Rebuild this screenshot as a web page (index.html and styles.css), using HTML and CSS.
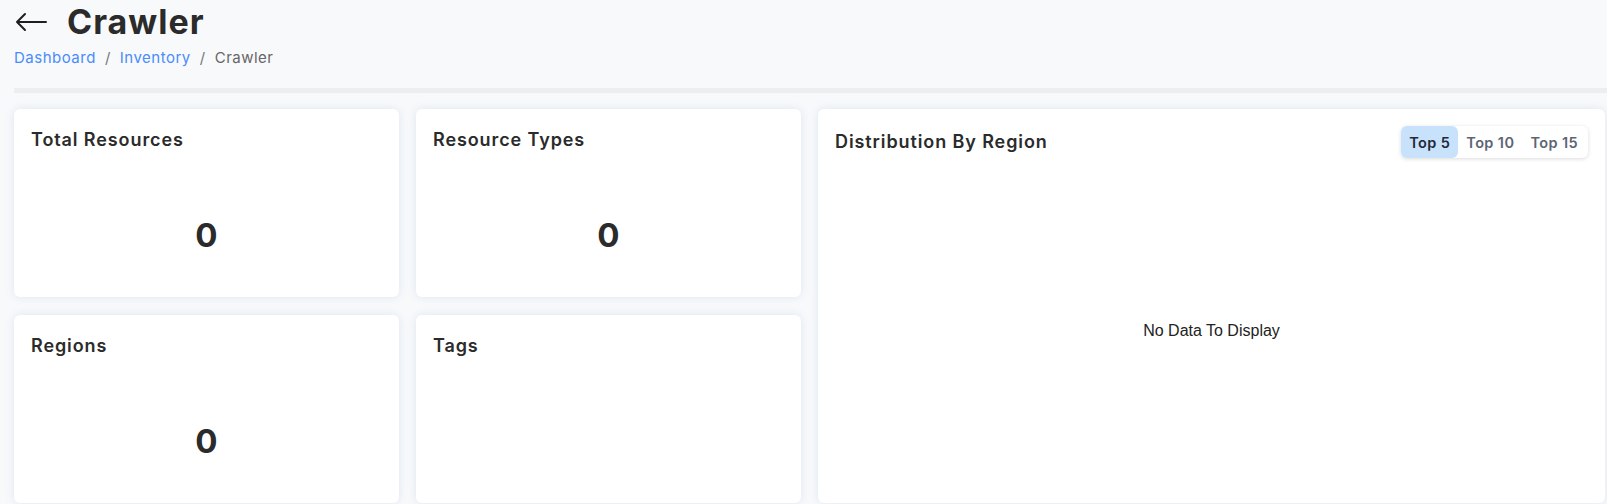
FILE: index.html
```html
<!DOCTYPE html>
<html lang="en">
<head>
<meta charset="utf-8">
<title>Crawler</title>
<link rel="stylesheet" href="styles.css">
</head>
<body>
<header class="page-header">
  <div class="title-row">
    <svg class="back-icon" width="32" height="20" viewBox="0 0 32 20" aria-hidden="true">
      <path d="M31 10H2M10 2L2 10L10 18" fill="none" stroke="#1f1f1f" stroke-width="2" stroke-linecap="round" stroke-linejoin="round"/>
    </svg>
    <h1 class="title">Crawler</h1>
  </div>
  <nav class="breadcrumb">
    <a class="crumb-link" href="#">Dashboard</a>
    <span class="sep">/</span>
    <a class="crumb-link" href="#">Inventory</a>
    <span class="sep">/</span>
    <span class="crumb-current">Crawler</span>
  </nav>
</header>
<div class="divider"></div>
<main class="grid">
  <section class="card stat">
    <h2 class="card-title">Total Resources</h2>
    <div class="stat-value">0</div>
  </section>
  <section class="card stat">
    <h2 class="card-title">Resource Types</h2>
    <div class="stat-value">0</div>
  </section>
  <section class="card chart">
    <div class="chart-head">
      <h2 class="card-title chart-title">Distribution By Region</h2>
      <div class="toggle">
        <button class="tg active">Top 5</button>
        <button class="tg">Top 10</button>
        <button class="tg">Top 15</button>
      </div>
    </div>
    <div class="chart-body">No Data To Display</div>
  </section>
  <section class="card stat">
    <h2 class="card-title">Regions</h2>
    <div class="stat-value">0</div>
  </section>
  <section class="card stat">
    <h2 class="card-title">Tags</h2>
    <div class="stat-value"></div>
  </section>
</main>
</body>
</html>
```
FILE: styles.css
```css
html, body {
  margin: 0;
  padding: 0;
}
body {
  background: #f8f9fb;
  font-family: Inter, "Open Sans", sans-serif;
  color: #2c2c2c;
  width: 1607px;
  height: 504px;
  overflow: hidden;
}
.page-header {
  padding: 4px 14px 0 14px;
}
.title-row {
  display: flex;
  align-items: center;
  height: 36px;
}
.back-icon {
  margin-left: 1px;
  margin-right: 20px;
}
.title {
  margin: 0;
  font-size: 34px;
  font-weight: 700;
  color: #2b2b2b;
  letter-spacing: 1px;
  line-height: 36px;
}
.breadcrumb {
  margin-top: 7px;
  font-size: 15px;
  letter-spacing: 0.5px;
  line-height: 22px;
  display: flex;
  gap: 9px;
}
.crumb-link {
  color: #4a8cfc;
  text-decoration: none;
}
.sep {
  color: #777;
}
.crumb-current {
  color: #666;
}
.divider {
  margin: 19px 0 0 14px;
  height: 5px;
  background: #eceeef;
}
.grid {
  display: grid;
  grid-template-columns: 385px 385px 787px;
  grid-template-rows: 188px 188px;
  column-gap: 17px;
  row-gap: 18px;
  padding: 16px 0 0 14px;
}
.card {
  background: #fff;
  border-radius: 6px;
  box-shadow: 0 0 10px rgba(40, 110, 170, 0.13);
  display: flex;
  flex-direction: column;
}
.stat {
  padding: 19px 17px 17px 17px;
}
.chart {
  grid-column: 3;
  grid-row: 1 / span 2;
}
.card-title {
  margin: 0;
  font-size: 18px;
  font-weight: 600;
  letter-spacing: 0.9px;
  line-height: 24px;
  color: #2b2b2b;
}
.stat-value {
  flex: 1;
  display: flex;
  align-items: center;
  justify-content: center;
  padding-top: 38px;
  font-size: 33px;
  font-weight: 700;
  color: #2b2b2b;
}
.chart-head {
  display: flex;
  justify-content: space-between;
  align-items: center;
  padding: 17px 17px 0 17px;
}
.chart-title {
  padding-left: 0;
}
.toggle {
  display: flex;
  background: #fff;
  border-radius: 6px;
  box-shadow: 0 1px 4px rgba(0, 0, 0, 0.14);
  height: 32px;
  padding-right: 2px;
}
.tg {
  border: none;
  background: transparent;
  font-family: Inter, "Open Sans", sans-serif;
  font-size: 14.5px;
  font-weight: 600;
  letter-spacing: 0.4px;
  color: #5d6573;
  padding: 0 8px;
  border-radius: 6px;
  height: 32px;
}
.tg.active {
  background: #c8e2fc;
  color: #1f2937;
}
.chart-body {
  flex: 1;
  display: flex;
  align-items: center;
  justify-content: center;
  font-family: "Liberation Sans", Arial, sans-serif;
  font-size: 16px;
  color: #222;
}
```
